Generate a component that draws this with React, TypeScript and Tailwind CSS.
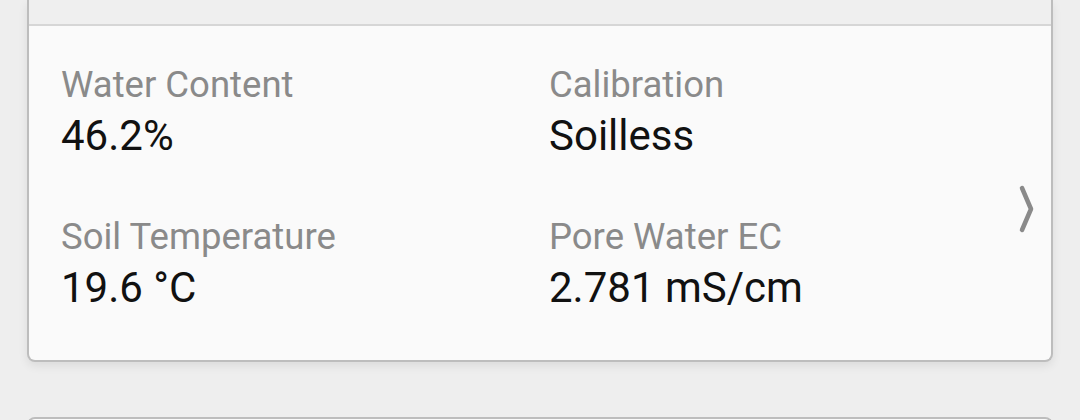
const Field = ({ label, value }: { label: string; value: string }) => {
  return (
    <div className="flex flex-col gap-[6px]">
      <span className="text-[36.5px] leading-[42px] text-[#8a8a8a]">{label}</span>
      <span className="text-[42px] leading-[48px] text-[#111111]">{value}</span>
    </div>
  );
};

export default function App() {
  return (
    <div
      className="w-[1080px] h-[420px] overflow-hidden bg-[#eeeeee] px-[27px]"
      style={{ fontFamily: "Roboto, 'Noto Sans', sans-serif" }}
    >
      {/* sensor card */}
      <div className="rounded-b-[8px] border-x-2 border-b-2 border-[#bdbdbd] bg-[#fafafa] shadow-[0_4px_10px_rgba(0,0,0,0.08)]">
        <div className="h-[26px] bg-[#efefef] border-b-2 border-[#d6d6d6]" />
        <div className="flex pl-[32px] pt-[38px] pb-[48px]">
          <div className="grid grid-cols-[488px_1fr] gap-y-[56px] flex-1">
            <Field label="Water Content" value="46.2%" />
            <Field label="Calibration" value="Soilless" />
            <Field label="Soil Temperature" value="19.6 °C" />
            <Field label="Pore Water EC" value="2.781 mS/cm" />
          </div>
          <div className="pr-[17px] pt-[121px]">
            <svg width="16" height="48" viewBox="0 0 16 48" fill="none">
              <path
                d="M4 3 L13 24 L4 45"
                stroke="#8a8a8a"
                strokeWidth="4.5"
                strokeLinecap="round"
                strokeLinejoin="round"
              />
            </svg>
          </div>
        </div>
      </div>
      {/* next card */}
      <div className="mt-[55px] h-[40px] rounded-t-[8px] border-x-2 border-t-2 border-[#bdbdbd] bg-[#fafafa]" />
    </div>
  );
}
